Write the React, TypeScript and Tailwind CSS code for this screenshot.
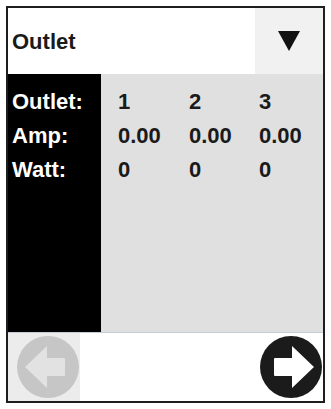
import React from "react";

const rows = [
  { label: "Outlet:", values: ["1", "2", "3"] },
  { label: "Amp:", values: ["0.00", "0.00", "0.00"] },
  { label: "Watt:", values: ["0", "0", "0"] },
];

function ArrowButton({ dir, circle, arrow }: { dir: "left" | "right"; circle: string; arrow: string }) {
  return (
    <svg width="64" height="64" viewBox="0 0 64 64" className={dir === "left" ? "-scale-x-100" : ""}>
      <circle cx="32" cy="32" r="31" fill={circle} />
      <path
        d="M15 24 Q15 23 16 23 L33 23 L33 11 L55 32 L33 53 L33 41 L16 41 Q15 41 15 40 Z"
        fill={arrow}
      />
    </svg>
  );
}

export default function App() {
  return (
    <div className="w-[331px] h-[409px] bg-white p-[6px] font-['Liberation_Sans',Arial,sans-serif]">
      <div className="w-full h-full border-2 border-[#1e1e1e] flex flex-col">
        {/* header / selector */}
        <div className="h-[66px] flex shrink-0">
          <div className="flex-1 bg-white flex items-center pl-1 text-[22px] font-bold text-[#1a1a1a]">
            Outlet
          </div>
          <div className="w-[68px] shrink-0 bg-[#f1f1f1] flex items-center justify-center">
            <svg width="22" height="20" viewBox="0 0 22 20">
              <path d="M0 0 L22 0 L11 20 Z" fill="#111" />
            </svg>
          </div>
        </div>

        {/* readings */}
        <div className="flex-1 flex min-h-0">
          <div className="w-[93px] shrink-0 bg-black pt-[11px] pl-1 text-white text-[22px] font-bold leading-[34px]">
            {rows.map((r) => (
              <div key={r.label}>{r.label}</div>
            ))}
          </div>
          <div className="flex-1 min-w-0 bg-[#e0e0e0] pt-[11px] pl-[17px] text-[#1a1a1a] text-[22px] font-bold leading-[34px]">
            {rows.map((r) => (
              <div key={r.label} className="grid grid-cols-[71px_70px_1fr]">
                {r.values.map((v, i) => (
                  <span key={i}>{v}</span>
                ))}
              </div>
            ))}
          </div>
        </div>

        <div className="h-px bg-[#c3ccd8] shrink-0" />

        {/* footer nav */}
        <div className="h-[68px] bg-white flex items-center justify-between shrink-0">
          <div className="w-[72px] h-full bg-[#ececec] flex items-center justify-end">
            <ArrowButton dir="left" circle="#c6c6c6" arrow="#e2e2e2" />
          </div>
          <ArrowButton dir="right" circle="#1b1b1b" arrow="#ffffff" />
        </div>
      </div>
    </div>
  );
}
